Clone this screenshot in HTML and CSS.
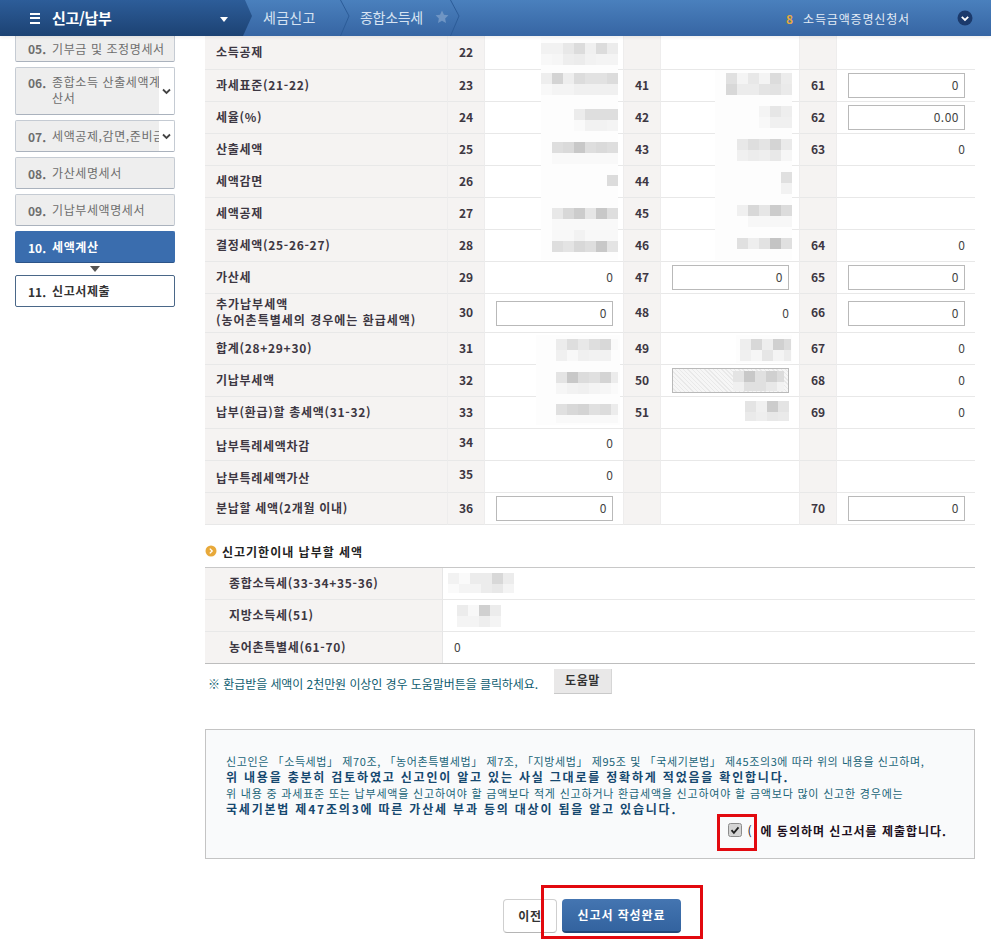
FILE: index.html
```html
<!DOCTYPE html>
<html lang="ko">
<head>
<meta charset="utf-8">
<title>신고/납부</title>
<link rel="stylesheet" href="styles.css">
</head>
<body>
<header class="topbar">
  <div class="menu-head">
    <span class="burger"><i></i><i></i><i></i></span>
    <span class="menu-title">신고/납부</span>
    <span class="caret"></span>
  </div>
  <nav class="crumbs">
    <span class="crumb crumb-a">세금신고</span>
    <svg class="chev" width="10" height="36" viewBox="0 0 10 36"><path d="M0.5 0L9 16L0.5 36" fill="none" stroke="#2c5c98" stroke-width="1"/></svg>
    <span class="crumb crumb-b">종합소득세</span>
    <svg class="star" width="14" height="14" viewBox="0 0 24 24"><path d="M12 1l3.4 7.2 7.6 1-5.6 5.4 1.4 7.8L12 18.6 5.2 22.4l1.4-7.8L1 9.200l7.600-1z" fill="#6f95c4"/></svg>
    <svg class="chev chev-b" width="10" height="36" viewBox="0 0 10 36"><path d="M0.5 0L9 16L0.5 36" fill="none" stroke="#2c5c98" stroke-width="1"/></svg>
  </nav>
  <div class="quick">
    <b class="quick-no">8</b>
    <span class="quick-text">소득금액증명신청서</span>
    <span class="quick-btn"><svg width="16" height="16" viewBox="0 0 16 16"><circle cx="8" cy="8" r="7.500" fill="#1b3a6c"/><path d="M4.800 6.800L8 10l3.200-3.200" fill="none" stroke="#fff" stroke-width="1.800"/></svg></span>
  </div>
</header>

<div class="layout">
  <aside class="side">
    <div class="step step-cut"><b class="no">05.</b><span class="name">기부금 및 조정명세서</span></div>
    <div class="step step-tall"><b class="no">06.</b><span class="name name-wrap">종합소득 산출세액계산서</span><span class="toggle"><svg width="9" height="7" viewBox="0 0 9 7"><path d="M1 1.500l3.500 3.500L8 1.500" fill="none" stroke="#444" stroke-width="1.800"/></svg></span></div>
    <div class="step"><b class="no">07.</b><span class="name">세액공제,감면,준비금</span><span class="toggle"><svg width="9" height="7" viewBox="0 0 9 7"><path d="M1 1.500l3.500 3.500L8 1.500" fill="none" stroke="#444" stroke-width="1.800"/></svg></span></div>
    <div class="step"><b class="no">08.</b><span class="name">가산세명세서</span></div>
    <div class="step"><b class="no">09.</b><span class="name">기납부세액명세서</span></div>
    <div class="step step-on"><b class="no">10.</b><span class="name">세액계산</span></div>
    <div class="step-arrow"></div>
    <div class="step step-next"><b class="no">11.</b><span class="name">신고서제출</span></div>
  </aside>

  <main class="content">
    <table class="calc">
      <colgroup><col class="c-label"><col class="c-no"><col class="c-val"><col class="c-no"><col class="c-val"><col class="c-no"><col class="c-val"></colgroup>
      <tr class="r-first"><th>소득공제</th><th class="n">22</th><td></td><th class="n"></th><td></td><th class="n"></th><td></td></tr>
      <tr><th>과세표준(21-22)</th><th class="n">23</th><td></td><th class="n">41</th><td></td><th class="n">61</th><td><input class="amt" value="0"></td></tr>
      <tr><th>세율(%)</th><th class="n">24</th><td></td><th class="n">42</th><td></td><th class="n">62</th><td><input class="amt" value="0.00"></td></tr>
      <tr><th>산출세액</th><th class="n">25</th><td></td><th class="n">43</th><td></td><th class="n">63</th><td>0</td></tr>
      <tr><th>세액감면</th><th class="n">26</th><td></td><th class="n">44</th><td></td><th class="n"></th><td></td></tr>
      <tr><th>세액공제</th><th class="n">27</th><td></td><th class="n">45</th><td></td><th class="n"></th><td></td></tr>
      <tr><th>결정세액(25-26-27)</th><th class="n">28</th><td></td><th class="n">46</th><td></td><th class="n">64</th><td>0</td></tr>
      <tr><th>가산세</th><th class="n">29</th><td>0</td><th class="n">47</th><td><input class="amt" value="0"></td><th class="n">65</th><td><input class="amt" value="0"></td></tr>
      <tr class="r-tall"><th>추가납부세액<br>(농어촌특별세의 경우에는 환급세액)</th><th class="n">30</th><td><input class="amt" value="0"></td><th class="n">48</th><td>0</td><th class="n">66</th><td><input class="amt" value="0"></td></tr>
      <tr><th>합계(28+29+30)</th><th class="n">31</th><td></td><th class="n">49</th><td></td><th class="n">67</th><td>0</td></tr>
      <tr><th>기납부세액</th><th class="n">32</th><td></td><th class="n">50</th><td><input class="amt amt-hatch" value=""></td><th class="n">68</th><td>0</td></tr>
      <tr><th>납부(환급)할 총세액(31-32)</th><th class="n">33</th><td></td><th class="n">51</th><td></td><th class="n">69</th><td>0</td></tr>
      <tr class="r-low"><th>납부특례세액차감</th><th class="n">34</th><td>0</td><th class="n"></th><td></td><th class="n"></th><td></td></tr>
      <tr class="r-low"><th>납부특례세액가산</th><th class="n">35</th><td>0</td><th class="n"></th><td></td><th class="n"></th><td></td></tr>
      <tr><th>분납할 세액(2개월 이내)</th><th class="n">36</th><td><input class="amt" value="0"></td><th class="n"></th><td></td><th class="n">70</th><td><input class="amt" value="0"></td></tr>
    </table>

    <h3 class="sec-title"><svg width="12" height="12" viewBox="0 0 12 12"><circle cx="6" cy="6" r="5.500" fill="#e8a93a"/><path d="M4.800 3.600L7.200 6 4.800 8.400" fill="none" stroke="#fff" stroke-width="1.300"/></svg>신고기한이내 납부할 세액</h3>

    <table class="sum">
      <tr><th>종합소득세(33-34+35-36)</th><td></td></tr>
      <tr><th>지방소득세(51)</th><td></td></tr>
      <tr><th>농어촌특별세(61-70)</th><td>0</td></tr>
    </table>

    <div class="help">
      <span class="help-text">※ 환급받을 세액이 2천만원 이상인 경우 도움말버튼을 클릭하세요.</span>
      <button class="help-btn" type="button">도움말</button>
    </div>

    <section class="notice">
      <p class="t1">신고인은 「소득세법」 제70조, 「농어촌특별세법」 제7조, 「지방세법」 제95조 및 「국세기본법」 제45조의3에 따라 위의 내용을 신고하며,</p>
      <p class="t2">위 내용을 충분히 검토하였고 신고인이 알고 있는 사실 그대로를 정확하게 적었음을 확인합니다.</p>
      <p class="t1 t3">위 내용 중 과세표준 또는 납부세액을 신고하여야 할 금액보다 적게 신고하거나 환급세액을 신고하여야 할 금액보다 많이 신고한 경우에는</p>
      <p class="t2">국세기본법 제47조의3에 따른 가산세 부과 등의 대상이 됨을 알고 있습니다.</p>
      <div class="agree">
        <span class="tick"><svg width="14" height="14" viewBox="0 0 14 14"><rect x="0.500" y="0.500" width="13" height="13" rx="2" fill="#d4d4d4" stroke="#8c8c8c"/><path d="M3.500 7.200l2.400 2.600 4.600-5.400" fill="none" stroke="#222" stroke-width="1.800"/></svg></span>
        <span class="agree-open">(</span>
        <span class="agree-text">에 동의하며 신고서를 제출합니다.</span>
      </div>
    </section>

    <div class="actions">
      <button class="btn-prev" type="button">이전</button>
      <button class="btn-done" type="button">신고서 작성완료</button>
    </div>
  </main>
</div>

<svg class="overlay" width="991" height="943" viewBox="0 0 991 943" aria-hidden="true">
  <g fill="#fdfdfd"><rect x="541" y="37" width="77" height="223"/><rect x="715" y="70" width="77" height="190"/><rect x="536" y="335" width="84" height="90"/><rect x="736" y="335" width="56" height="28"/></g>
  <g class="mosaic">
    <rect x="541" y="43" width="11" height="11" fill="#f2f2f2"/><rect x="552" y="43" width="11" height="11" fill="#f2f2f2"/><rect x="563" y="43" width="11" height="11" fill="#e8e8e8"/><rect x="574" y="43" width="11" height="11" fill="#dcdcdc"/><rect x="585" y="43" width="11" height="11" fill="#f0f0f0"/><rect x="596" y="43" width="11" height="11" fill="#dcdcdc"/><rect x="607" y="43" width="11" height="11" fill="#ececec"/>
    <rect x="541" y="54" width="11" height="11" fill="#f8f8f8"/><rect x="552" y="54" width="11" height="11" fill="#f6f6f6"/><rect x="563" y="54" width="11" height="11" fill="#eeeeee"/><rect x="574" y="54" width="11" height="11" fill="#ececec"/><rect x="585" y="54" width="11" height="11" fill="#f2f2f2"/><rect x="596" y="54" width="11" height="11" fill="#f4f4f4"/><rect x="607" y="54" width="11" height="11" fill="#f4f4f4"/>
    <rect x="541" y="73" width="11" height="11" fill="#eeeeee"/><rect x="552" y="73" width="11" height="11" fill="#d4d4d4"/><rect x="563" y="73" width="11" height="11" fill="#eeeeee"/><rect x="574" y="73" width="11" height="11" fill="#dcdcdc"/><rect x="585" y="73" width="11" height="11" fill="#e2e2e2"/><rect x="596" y="73" width="11" height="11" fill="#e2e2e2"/><rect x="607" y="73" width="11" height="11" fill="#dcdcdc"/>
    <rect x="541" y="84" width="11" height="11" fill="#f8f8f8"/><rect x="552" y="84" width="11" height="11" fill="#f4f4f4"/><rect x="563" y="84" width="11" height="11" fill="#f4f4f4"/><rect x="574" y="84" width="11" height="11" fill="#f0f0f0"/><rect x="585" y="84" width="11" height="11" fill="#f0f0f0"/><rect x="596" y="84" width="11" height="11" fill="#f0f0f0"/><rect x="607" y="84" width="11" height="11" fill="#f0f0f0"/>
    <rect x="574" y="109" width="11" height="11" fill="#ececec"/><rect x="585" y="109" width="11" height="11" fill="#dedede"/><rect x="596" y="109" width="11" height="11" fill="#dedede"/><rect x="607" y="109" width="11" height="11" fill="#dedede"/>
    <rect x="574" y="120" width="11" height="11" fill="#fafafa"/><rect x="585" y="120" width="11" height="11" fill="#f2f2f2"/><rect x="596" y="120" width="11" height="11" fill="#f2f2f2"/><rect x="607" y="120" width="11" height="11" fill="#f4f4f4"/>
    <rect x="552" y="142" width="11" height="11" fill="#dedede"/><rect x="563" y="142" width="11" height="11" fill="#dadada"/><rect x="574" y="142" width="11" height="11" fill="#c8c8c8"/><rect x="585" y="142" width="11" height="11" fill="#dedede"/><rect x="596" y="142" width="11" height="11" fill="#dadada"/><rect x="607" y="142" width="11" height="11" fill="#dedede"/>
    <rect x="552" y="153" width="66" height="11" fill="#f9f9f9"/>
    <rect x="607" y="175" width="11" height="11" fill="#dcdcdc"/>
    <rect x="552" y="208" width="11" height="11" fill="#e8e8e8"/><rect x="563" y="208" width="11" height="11" fill="#d8d8d8"/><rect x="574" y="208" width="11" height="11" fill="#cccccc"/><rect x="585" y="208" width="11" height="11" fill="#e6e6e6"/><rect x="596" y="208" width="11" height="11" fill="#c8c8c8"/><rect x="607" y="208" width="11" height="11" fill="#dedede"/>
    <rect x="552" y="219" width="66" height="11" fill="#f9f9f9"/>
    <rect x="552" y="230" width="66" height="11" fill="#f8f8f8"/><rect x="574" y="230" width="11" height="11" fill="#f2f2f2"/>
    <rect x="552" y="241" width="11" height="11" fill="#dedede"/><rect x="563" y="241" width="11" height="11" fill="#e4e4e4"/><rect x="574" y="241" width="11" height="11" fill="#d8d8d8"/><rect x="585" y="241" width="11" height="11" fill="#dedede"/><rect x="596" y="241" width="11" height="11" fill="#c8c8c8"/><rect x="607" y="241" width="11" height="11" fill="#e4e4e4"/>
    <rect x="556" y="339" width="11" height="11" fill="#ececec"/><rect x="567" y="339" width="11" height="11" fill="#dedede"/><rect x="578" y="339" width="11" height="11" fill="#e8e8e8"/><rect x="589" y="339" width="11" height="11" fill="#dedede"/><rect x="600" y="339" width="11" height="11" fill="#d8d8d8"/><rect x="611" y="339" width="7" height="11" fill="#fafafa"/>
    <rect x="556" y="350" width="11" height="11" fill="#f0f0f0"/><rect x="567" y="350" width="11" height="11" fill="#f8f8f8"/><rect x="578" y="350" width="11" height="11" fill="#f0f0f0"/><rect x="589" y="350" width="11" height="11" fill="#f2f2f2"/><rect x="600" y="350" width="11" height="11" fill="#f2f2f2"/>
    <rect x="556" y="372" width="11" height="11" fill="#e4e4e4"/><rect x="567" y="372" width="11" height="11" fill="#c8c8c8"/><rect x="578" y="372" width="11" height="11" fill="#dcdcdc"/><rect x="589" y="372" width="11" height="11" fill="#e0e0e0"/><rect x="600" y="372" width="11" height="11" fill="#d4d4d4"/><rect x="611" y="372" width="7" height="11" fill="#ececec"/>
    <rect x="556" y="383" width="11" height="11" fill="#f6f6f6"/><rect x="567" y="383" width="11" height="11" fill="#f2f2f2"/><rect x="578" y="383" width="11" height="11" fill="#f0f0f0"/><rect x="589" y="383" width="11" height="11" fill="#f4f4f4"/><rect x="600" y="383" width="11" height="11" fill="#f6f6f6"/><rect x="611" y="383" width="7" height="11" fill="#fafafa"/>
    <rect x="556" y="404" width="11" height="11" fill="#e0e0e0"/><rect x="567" y="404" width="11" height="11" fill="#d8d8d8"/><rect x="578" y="404" width="11" height="11" fill="#d4d4d4"/><rect x="589" y="404" width="11" height="11" fill="#e0e0e0"/><rect x="600" y="404" width="11" height="11" fill="#dcdcdc"/><rect x="611" y="404" width="7" height="11" fill="#ececec"/>
    <rect x="556" y="415" width="62" height="8" fill="#f9f9f9"/>
    <rect x="726" y="73" width="11" height="11" fill="#e0e0e0"/><rect x="737" y="73" width="11" height="11" fill="#f4f4f4"/><rect x="748" y="73" width="11" height="11" fill="#e8e8e8"/><rect x="759" y="73" width="11" height="11" fill="#f4f4f4"/><rect x="770" y="73" width="11" height="11" fill="#dcdcdc"/><rect x="781" y="73" width="11" height="11" fill="#ececec"/>
    <rect x="726" y="84" width="11" height="11" fill="#d8d8d8"/><rect x="737" y="84" width="11" height="11" fill="#ececec"/><rect x="748" y="84" width="11" height="11" fill="#ececec"/><rect x="759" y="84" width="11" height="11" fill="#e4e4e4"/><rect x="770" y="84" width="11" height="11" fill="#e2e2e2"/><rect x="781" y="84" width="11" height="11" fill="#eaeaea"/>
    <rect x="759" y="106" width="11" height="11" fill="#f4f4f4"/><rect x="770" y="106" width="11" height="11" fill="#e6e6e6"/><rect x="781" y="106" width="11" height="11" fill="#eeeeee"/>
    <rect x="759" y="117" width="11" height="11" fill="#f8f8f8"/><rect x="770" y="117" width="11" height="11" fill="#f0f0f0"/><rect x="781" y="117" width="11" height="11" fill="#f0f0f0"/>
    <rect x="737" y="139" width="11" height="11" fill="#e8e8e8"/><rect x="748" y="139" width="11" height="11" fill="#dedede"/><rect x="759" y="139" width="11" height="11" fill="#e4e4e4"/><rect x="770" y="139" width="11" height="11" fill="#d4d4d4"/><rect x="781" y="139" width="11" height="11" fill="#eaeaea"/>
    <rect x="737" y="150" width="11" height="11" fill="#f0f0f0"/><rect x="748" y="150" width="11" height="11" fill="#ececec"/><rect x="759" y="150" width="11" height="11" fill="#eeeeee"/><rect x="770" y="150" width="11" height="11" fill="#e8e8e8"/><rect x="781" y="150" width="11" height="11" fill="#f6f6f6"/>
    <rect x="781" y="172" width="11" height="11" fill="#e0e0e0"/><rect x="781" y="183" width="11" height="11" fill="#f2f2f2"/>
    <rect x="737" y="205" width="11" height="11" fill="#f0f0f0"/><rect x="748" y="205" width="11" height="11" fill="#d8d8d8"/><rect x="759" y="205" width="11" height="11" fill="#e6e6e6"/><rect x="770" y="205" width="11" height="11" fill="#cccccc"/><rect x="781" y="205" width="11" height="11" fill="#dcdcdc"/>
    <rect x="748" y="216" width="44" height="11" fill="#f7f7f7"/>
    <rect x="737" y="238" width="11" height="11" fill="#e0e0e0"/><rect x="748" y="238" width="11" height="11" fill="#eeeeee"/><rect x="759" y="238" width="11" height="11" fill="#e2e2e2"/><rect x="770" y="238" width="11" height="11" fill="#c4c4c4"/><rect x="781" y="238" width="11" height="11" fill="#e0e0e0"/>
    <rect x="740" y="339" width="11" height="11" fill="#eeeeee"/><rect x="751" y="339" width="11" height="11" fill="#d8d8d8"/><rect x="762" y="339" width="11" height="11" fill="#eeeeee"/><rect x="773" y="339" width="11" height="11" fill="#d0d0d0"/><rect x="784" y="339" width="7" height="11" fill="#dcdcdc"/>
    <rect x="740" y="350" width="11" height="11" fill="#f0f0f0"/><rect x="751" y="350" width="11" height="11" fill="#f6f6f6"/><rect x="762" y="350" width="11" height="11" fill="#e6e6e6"/><rect x="773" y="350" width="11" height="11" fill="#f4f4f4"/><rect x="784" y="350" width="7" height="11" fill="#ececec"/>
    <rect x="733" y="371" width="11" height="11" fill="#e4e4e4"/><rect x="744" y="371" width="11" height="11" fill="#c8c8c8"/><rect x="755" y="371" width="11" height="11" fill="#e0e0e0"/><rect x="766" y="371" width="11" height="11" fill="#d0d0d0"/><rect x="777" y="371" width="7" height="11" fill="#dcdcdc"/>
    <rect x="733" y="382" width="11" height="9" fill="#f0f0f0"/><rect x="744" y="382" width="11" height="9" fill="#e0e0e0"/><rect x="755" y="382" width="11" height="9" fill="#e0e0e0"/><rect x="766" y="382" width="11" height="9" fill="#e8e8e8"/><rect x="777" y="382" width="7" height="9" fill="#f2f2f2"/>
    <rect x="745" y="401" width="11" height="11" fill="#e4e4e4"/><rect x="756" y="401" width="11" height="11" fill="#f0f0f0"/><rect x="767" y="401" width="11" height="11" fill="#cccccc"/><rect x="778" y="401" width="11" height="11" fill="#e4e4e4"/>
    <rect x="745" y="412" width="11" height="9" fill="#eaeaea"/><rect x="756" y="412" width="11" height="9" fill="#eeeeee"/><rect x="767" y="412" width="11" height="9" fill="#e8e8e8"/><rect x="778" y="412" width="11" height="9" fill="#eaeaea"/>
    <rect x="448" y="573" width="11" height="11" fill="#f2f2f2"/><rect x="459" y="573" width="11" height="11" fill="#fafafa"/><rect x="470" y="573" width="11" height="11" fill="#ececec"/><rect x="481" y="573" width="11" height="11" fill="#ececec"/><rect x="492" y="573" width="11" height="11" fill="#d8d8d8"/><rect x="503" y="573" width="11" height="11" fill="#ececec"/>
    <rect x="448" y="584" width="11" height="9" fill="#fafafa"/><rect x="459" y="584" width="11" height="9" fill="#f4f4f4"/><rect x="470" y="584" width="11" height="9" fill="#f4f4f4"/><rect x="481" y="584" width="11" height="9" fill="#ececec"/><rect x="492" y="584" width="11" height="9" fill="#e8e8e8"/><rect x="503" y="584" width="11" height="9" fill="#f4f4f4"/>
    <rect x="457" y="605" width="11" height="11" fill="#ececec"/><rect x="468" y="605" width="11" height="11" fill="#f8f8f8"/><rect x="479" y="605" width="11" height="11" fill="#d0d0d0"/><rect x="490" y="605" width="11" height="11" fill="#ececec"/>
    <rect x="457" y="616" width="11" height="11" fill="#f4f4f4"/><rect x="468" y="616" width="11" height="11" fill="#f4f4f4"/><rect x="479" y="616" width="11" height="11" fill="#eeeeee"/><rect x="490" y="616" width="11" height="11" fill="#f4f4f4"/>
  </g>
  <g fill="none" stroke="#e2090f" stroke-width="3">
    <rect x="718.500" y="815.500" width="37" height="34"/>
    <rect x="542.500" y="886.500" width="159" height="51"/>
  </g>
</svg>
</body>
</html>
```
FILE: styles.css
```css
* { box-sizing: border-box; }
html, body { margin: 0; padding: 0; }
body {
  position: relative;
  width: 991px;
  height: 943px;
  overflow: hidden;
  background: #fff;
  font-family: "Noto Sans CJK KR", "Noto Sans", sans-serif;
  font-size: 12px;
  color: #333;
}
.topbar {
  position: relative;
  z-index: 2;
  display: flex;
  height: 36px;
  background: linear-gradient(#4a80bd, #3665a3);
  box-shadow: 0 2px 3px rgba(0, 0, 0, .06);
}
.menu-head {
  display: flex;
  align-items: center;
  flex: 0 0 253px;
  padding-left: 30px;
  background: linear-gradient(#2d5d99, #1c4273);
  clip-path: polygon(0 0, 245px 0, 252px 16px, 243px 36px, 0 36px);
}
.burger { display: flex; flex-direction: column; gap: 2.500px; width: 10px; }
.burger i { display: block; height: 2px; background: #fff; }
.menu-title { margin-left: 12px; font-size: 15px; font-weight: 700; color: #fff; letter-spacing: -.3px; line-height: 30px; }
.caret {
  margin-left: 108px;
  margin-top: 2px;
  border-left: 4px solid transparent;
  border-right: 4px solid transparent;
  border-top: 5px solid #fff;
}
.crumbs { display: flex; align-items: center; margin-left: 10px; color: #d6e3f2; font-size: 14px; }
.crumb { line-height: 32px; margin-top: -2px; }
.crumb-a { width: 77px; letter-spacing: .3px; }
.chev { flex: none; }
.crumb-b { margin-left: 10px; width: 75px; letter-spacing: -.3px; white-space: nowrap; }
.star { flex: none; margin-top: -2px; }
.chev-b { margin-left: 1px; }
.quick { display: flex; align-items: center; margin-left: auto; padding-right: 18px; }
.quick-no { color: #e6a93c; font-size: 12px; margin-right: 10px; }
.quick-text { color: #e3ebf5; width: 107px; white-space: nowrap; letter-spacing: .85px; }
.quick-btn { display: flex; margin-left: 47px; }

.layout { display: flex; align-items: flex-start; }
.side { flex: 0 0 205px; display: flex; flex-direction: column; gap: 5px; padding-left: 15px; }
.step {
  position: relative;
  display: flex;
  align-items: center;
  width: 160px;
  height: 32px;
  padding-left: 12px;
  overflow: hidden;
  background: #eeeeee;
  border: 1px solid #c5cbd3;
  border-bottom-color: #aab2bd;
  border-radius: 2px;
  color: #6d6d6d;
  white-space: nowrap;
}
.step-cut { height: 26px; border-top: 0; border-radius: 0 0 2px 2px; }
.step-tall { height: 48px; align-items: flex-start; padding-top: 6px; }
.no { flex: none; width: 24px; font-weight: 700; }
.name { line-height: 16px; letter-spacing: .6px; }
.name-wrap { display: block; width: 113px; white-space: normal; word-break: break-all; }
.toggle {
  position: absolute;
  top: 0;
  right: 0;
  bottom: 0;
  width: 15px;
  display: flex;
  align-items: center;
  justify-content: center;
  background: #fff;
}
.step-on { background: #3a6dae; border-color: #3a6dae; border-bottom-color: #2c5488; color: #fff; font-weight: 700; }
.step-next { background: #fff; border-color: #4a6788; color: #333; font-weight: 700; }
.step-arrow {
  align-self: flex-start;
  margin: -2px 0 -2px 75px;
  border-left: 5px solid transparent;
  border-right: 5px solid transparent;
  border-top: 6px solid #555;
}

.content { flex: 0 0 770px; }
table { border-spacing: 0; border-collapse: separate; table-layout: fixed; width: 770px; }
.c-label { width: 242px; }
.c-no { width: 38px; }
.c-val { width: 138px; }
.calc th, .calc td { height: 32px; padding: 0 0 2px; border-bottom: 1px solid #e8e8e8; vertical-align: middle; }
.calc th { background: #f5f3f2; padding-left: 11px; text-align: left; font-weight: 700; color: #3d3742; line-height: 16px; letter-spacing: .7px; }
.calc th.n { padding-left: 0; text-align: center; letter-spacing: 0; border-left: 1px solid #eeeded; border-right: 1px solid #eeeded; }
.calc td { padding-right: 10px; text-align: right; color: #444; }
.calc .r-first th, .calc .r-first td { height: 34px; }
.calc .r-tall th, .calc .r-tall td { height: 39px; }
.calc .r-tall th:first-child { letter-spacing: 1px; }
.calc .r-low th:first-child { padding-top: 5px; }
.calc .r-low th.n { padding-bottom: 5px; }
.calc .r-low td { padding-bottom: 5px; }
.amt {
  display: block;
  width: 117px;
  height: 25px;
  margin: 0 0 -2px auto;
  padding: 0 5px 2px 0;
  border: 1px solid #b9b9b9;
  background: #fff;
  text-align: right;
  font: 12px "Noto Sans CJK KR", sans-serif;
  color: #444;
  letter-spacing: .5px;
}
.amt-hatch {
  background: repeating-linear-gradient(45deg, #f6f6f6 0, #f6f6f6 2px, #e9e9e9 2px, #e9e9e9 3px);
}

.sec-title {
  display: flex;
  align-items: center;
  gap: 5px;
  height: 18px;
  margin: 17px 0 7px;
  font-size: 12px;
  font-weight: 700;
  color: #222;
  letter-spacing: 1px;
}
.sum { border-top: 1px solid #c8c8c8; border-bottom: 1px solid #bdbdbd; }
.sum th, .sum td { height: 32px; padding: 0 0 3px; border-bottom: 1px solid #e8e8e8; }
.sum tr:last-child th, .sum tr:last-child td { border-bottom: 0; height: 31px; }
.sum th { width: 238px; padding-left: 24px; background: #f5f3f2; border-right: 1px solid #e6e6e6; text-align: left; color: #3d3742; font-weight: 700; letter-spacing: .7px; }
.sum td { padding-left: 11px; color: #444; }

.help { display: flex; align-items: center; height: 25px; margin-top: 5px; padding-left: 3px; }
.help-text { width: 346px; padding-top: 3px; color: #0f5d70; font-size: 12px; letter-spacing: -.07px; white-space: nowrap; }
.help-btn {
  width: 58px;
  height: 25px;
  padding: 0 0 3px;
  background: #e9e8e8;
  border: 0;
  border-bottom: 1px solid #c9c9c9;
  border-right: 1px solid #d6d6d6;
  font: 700 12px "Noto Sans CJK KR", sans-serif;
  letter-spacing: .6px;
  color: #333;
}

.notice {
  height: 130px;
  margin-top: 35px;
  padding: 23px 27px 0 20px;
  background: #f9fafb;
  border: 1px solid #c4c4c4;
}
.notice p { margin: 0; line-height: 16px; white-space: nowrap; }
.t1 { color: #1a6478; font-size: 11px; letter-spacing: .6px; }
.t3 { letter-spacing: .8px; }
.t2 { color: #15486f; font-size: 12px; font-weight: 700; letter-spacing: 1.8px; }
.agree { display: flex; align-items: center; justify-content: flex-end; height: 16px; margin-top: 5px; color: #201020; font-weight: 700; letter-spacing: 1px; }
.tick { display: flex; margin-right: 5px; }
.agree-open { width: 13px; font-weight: 400; }
.actions { display: flex; gap: 5px; margin-top: 40px; padding-left: 298px; }
.btn-prev {
  width: 54px;
  height: 34px;
  padding: 0 0 2px;
  background: #fff;
  border: 1px solid #cfcfcf;
  border-bottom-color: #b5b5b5;
  border-radius: 4px;
  font: 700 12px "Noto Sans CJK KR", sans-serif;
  letter-spacing: .6px;
  color: #333;
}
.btn-done {
  width: 119px;
  height: 34px;
  padding: 0 0 2px;
  background: linear-gradient(#4475b1, #33639f);
  border: 0;
  border-bottom: 2px solid #22497a;
  border-radius: 4px;
  font: 700 12px "Noto Sans CJK KR", sans-serif;
  color: #fff;
  letter-spacing: .9px;
}
.overlay { position: absolute; top: 0; left: 0; z-index: 1; pointer-events: none; }
```
